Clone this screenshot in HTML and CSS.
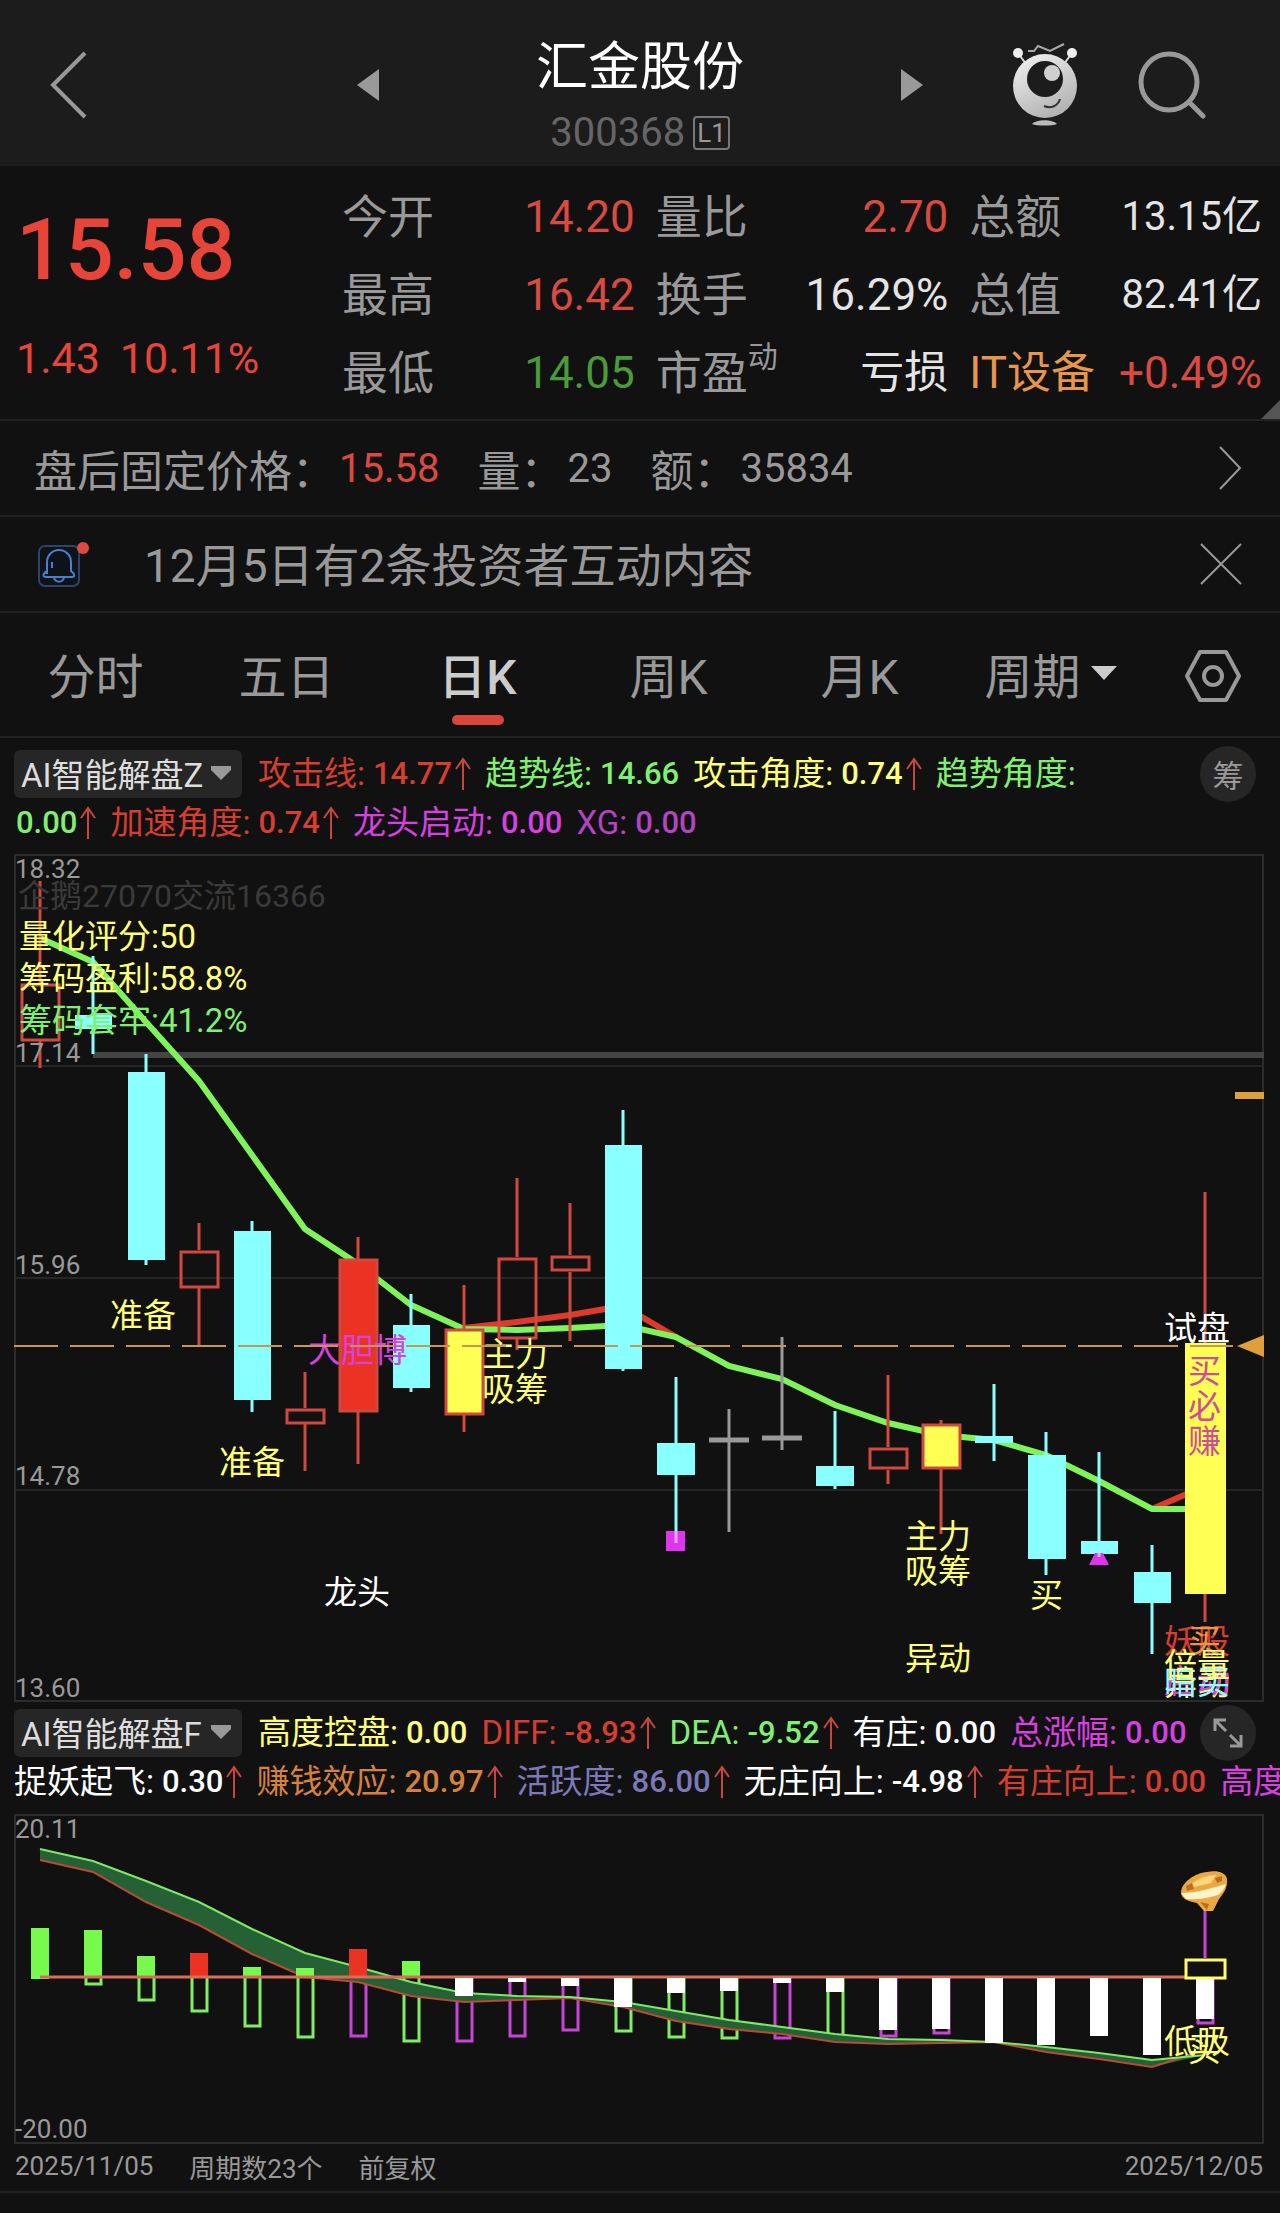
FILE: index.html
```
<!DOCTYPE html>
<html lang="zh-CN">

<head>
    <meta charset="UTF-8">
    <meta name="viewport" content="width=device-width, initial-scale=1">
    <title>汇金股份 300368</title>
    <link rel="stylesheet" href="styles.css">
</head>

<body>
    <!-- 公用图标 -->
    <svg class="sprite" aria-hidden="true">
        <symbol id="up" viewBox="0 0 16 34">
            <path d="M8 33V2M1 12L8 2l7 10" fill="none" stroke="#c8473c" stroke-width="2" />
        </symbol>
        <symbol id="caret" viewBox="0 0 22 14">
            <path d="M1 0h20v4L11 14 1 4z" fill="#999" />
        </symbol>
    </svg>

    <header class="topbar">
        <button class="icon-button" aria-label="返回">
            <svg width="40" height="70" viewBox="0 0 40 70"><path d="M37 3L5 35l32 32" fill="none" stroke="#999" stroke-width="4" /></svg>
        </button>
        <div class="stock-nav">
            <button class="icon-button" aria-label="上一只">
                <svg width="22" height="34" viewBox="0 0 22 34"><path d="M22 1v32L0 17z" fill="#999" /></svg>
            </button>
            <div class="stock-title">
                <h1>汇金股份</h1>
                <p>300368<span class="level">L1</span></p>
            </div>
            <button class="icon-button" aria-label="下一只">
                <svg width="22" height="34" viewBox="0 0 22 34"><path d="M0 1v32l22-16z" fill="#999" /></svg>
            </button>
        </div>
        <div class="actions">
            <button class="icon-button" aria-label="智能助手">
                <svg width="66" height="84" viewBox="0 0 66 84">
                    <defs>
                        <linearGradient id="ball" x1="0" y1="0" x2="0.5" y2="1">
                            <stop offset="0" stop-color="#f4f4f4" />
                            <stop offset="1" stop-color="#b4b4b4" />
                        </linearGradient>
                    </defs>
                    <path d="M6 10l8 11M60 10l-8 11" stroke="#ddd" stroke-width="2" />
                    <circle cx="6" cy="10" r="5" fill="#eee" />
                    <circle cx="60" cy="10" r="5" fill="#eee" />
                    <path d="M16 8h6l4-5 12 5L52 1" fill="none" stroke="#aaa" stroke-width="2" />
                    <circle cx="33" cy="43" r="32" fill="url(#ball)" />
                    <circle cx="33" cy="36" r="18" fill="#1c1c1c" />
                    <circle cx="40" cy="30" r="8" fill="#d0d0d0" />
                    <path d="M32 63c7 3 14 0 16-7" fill="none" stroke="#333" stroke-width="2" />
                    <path d="M20 81c5-5 20-5 25 0-5 2-20 2-25 0z" fill="#bbb" />
                </svg>
            </button>
            <button class="icon-button" aria-label="搜索">
                <svg width="68" height="68" viewBox="0 0 68 68">
                    <circle cx="31" cy="31" r="28" fill="none" stroke="#999" stroke-width="5" />
                    <path d="M51 51l14 14" stroke="#999" stroke-width="5" stroke-linecap="round" />
                </svg>
            </button>
        </div>
    </header>

    <!-- 行情 -->
    <section class="quote">
        <div class="price">
            <strong>15.58</strong>
            <p><span>1.43</span><span>10.11%</span></p>
        </div>
        <dl>
            <div><dt>今开</dt><dd class="red">14.20</dd></div>
            <div><dt>最高</dt><dd class="red">16.42</dd></div>
            <div><dt>最低</dt><dd class="green">14.05</dd></div>
        </dl>
        <dl>
            <div><dt>量比</dt><dd class="red">2.70</dd></div>
            <div><dt>换手</dt><dd>16.29%</dd></div>
            <div><dt>市盈<sup>动</sup></dt><dd>亏损</dd></div>
        </dl>
        <dl>
            <div><dt>总额</dt><dd class="amount">13.15亿</dd></div>
            <div><dt>总值</dt><dd class="amount">82.41亿</dd></div>
            <div><dt class="orange">IT设备</dt><dd class="red">+0.49%</dd></div>
        </dl>
        <span class="corner"></span>
    </section>

    <section class="row after-hours">
        <p><span>盘后固定价格：</span><span class="num red">15.58</span></p>
        <p><span>量：</span><span class="num">23</span></p>
        <p><span>额：</span><span class="num">35834</span></p>
        <button class="icon-button" aria-label="查看">
            <svg width="24" height="46" viewBox="0 0 24 46"><path d="M2 2l20 21L2 44" fill="none" stroke="#999" stroke-width="2" /></svg>
        </button>
    </section>

    <section class="row notice">
        <svg width="52" height="50" viewBox="0 0 52 50">
            <rect x="1" y="7" width="40" height="40" rx="6" fill="#0e1219" stroke="#2c4469" stroke-width="2" />
            <path d="M9 35V23a12 12 0 0 1 24 0v9c4 3 4 6 1 6H8c-4 0-3-4 1-6zM16 39c2 5 8 5 10 0M14 23v6" fill="none" stroke="#4a80cc" stroke-width="2" />
            <circle cx="45" cy="9" r="6" fill="#dc4a40" />
        </svg>
        <p>12月5日有2条投资者互动内容</p>
        <button class="icon-button" aria-label="关闭">
            <svg width="42" height="42" viewBox="0 0 42 42"><path d="M1 1l40 40M41 1L1 41" stroke="#999" stroke-width="2" /></svg>
        </button>
    </section>

    <nav class="tabs">
        <button>分时</button>
        <button>五日</button>
        <button class="active">日K</button>
        <button>周K</button>
        <button>月K</button>
        <button class="period">周期<svg width="26" height="14" viewBox="0 0 26 14"><path d="M0 0h26L13 14z" fill="#ccc" /></svg></button>
        <button class="settings" aria-label="设置">
            <svg width="56" height="52" viewBox="0 0 56 52">
                <path d="M15 2h26l13 24-13 24H15L2 26z" fill="none" stroke="#999" stroke-width="4" stroke-linejoin="round" />
                <circle cx="28" cy="26" r="9" fill="none" stroke="#999" stroke-width="4" />
            </svg>
        </button>
    </nav>

    <!-- 主图指标 -->
    <section class="indicator">
        <div class="line">
            <button class="picker">AI智能解盘Z<svg width="22" height="14"><use href="#caret" /></svg></button>
            <p class="red2">攻击线:<b>14.77</b><svg><use href="#up" /></svg></p>
            <p class="lime">趋势线:<b>14.66</b></p>
            <p class="yellow">攻击角度:<b>0.74</b><svg><use href="#up" /></svg></p>
            <p class="lime">趋势角度:</p>
            <button class="round">筹</button>
        </div>
        <div class="line">
            <p class="lime"><b class="first">0.00</b><svg><use href="#up" /></svg></p>
            <p class="red2">加速角度:<b>0.74</b><svg><use href="#up" /></svg></p>
            <p class="magenta">龙头启动:<b>0.00</b></p>
            <p class="purple">XG:<b>0.00</b></p>
        </div>
    </section>

    <div class="chart">
        <svg viewBox="14 854 1250 848" role="img" aria-label="日K线图">
            <path class="grid" d="M14 1066H1264M14 1278H1264M14 1490H1264" />
            <rect class="frame" x="15" y="855" width="1248" height="846" />
            <path d="M93 1055H1264" stroke="#444" stroke-width="6" />

            <!-- 均线 -->
            <path class="avg" stroke="#dc3a2a" d="M464 1328L517 1322 570 1315 623 1306 676 1337M1152 1509L1205 1486" />
            <path class="avg" stroke="#80f35a" d="M40 938L93 962 146 1022 199 1081 252 1155 305 1229 358 1264 411 1305 464 1329 517 1330 570 1328 623 1325 676 1337 729 1366 782 1379 835 1405 888 1423 941 1435 994 1440 1046 1455 1099 1481 1152 1509H1205" />

            <!-- 阴线 -->
            <g class="down">
                <path d="M93 956V1054M146 1054V1265M252 1221V1412M411 1294V1392M623 1110V1371M676 1377V1543M835 1411V1489M994 1384V1461M1046 1432V1575M1099 1452V1557M1152 1545V1654" />
                <rect x="75" y="1015" width="37" height="14" />
                <rect x="128" y="1072" width="37" height="188" />
                <rect x="234" y="1231" width="37" height="169" />
                <rect x="393" y="1325" width="37" height="63" />
                <rect x="605" y="1145" width="37" height="224" />
                <rect x="657" y="1443" width="38" height="32" />
                <rect x="816" y="1466" width="38" height="20" />
                <rect x="975" y="1436" width="38" height="7" />
                <rect x="1028" y="1455" width="38" height="104" />
                <rect x="1081" y="1541" width="37" height="13" />
                <rect x="1134" y="1572" width="37" height="31" />
            </g>

            <!-- 平盘 -->
            <path class="flat" d="M729 1409V1532M782 1337V1450" />
            <path d="M709 1440H749M762 1438H802" stroke="#999" stroke-width="5" />

            <!-- 阳线 -->
            <g class="up">
                <path d="M40 881V983M40 1041V1068M199 1223V1250M199 1288V1346M305 1372V1408M305 1424V1471M358 1237V1464M464 1285V1432M517 1178V1257M517 1339V1350M570 1203V1255M570 1272V1341M888 1375V1447M888 1470V1484M941 1420V1534M1205 1192V1622" />
                <rect x="22" y="985" width="37" height="55" />
                <rect x="181" y="1252" width="37" height="35" />
                <rect x="287" y="1410" width="37" height="13" />
                <rect x="499" y="1259" width="37" height="79" />
                <rect x="552" y="1257" width="37" height="13" />
                <rect x="870" y="1449" width="37" height="19" />
                <rect x="340" y="1260" width="37" height="151" fill="#ea3323" />
                <rect x="446" y="1330" width="37" height="84" fill="#ffff54" />
                <rect x="923" y="1425" width="37" height="43" fill="#ffff54" />
            </g>
            <rect x="1185" y="1343" width="41" height="251" fill="#ffff54" />
            <path d="M666 1531h19v20h-19zM1095 1553h8l6 12h-20z" fill="#dd36ee" />
            <path d="M676 1531V1543M1099 1553v4" stroke="#e8aaff" stroke-width="3" />

            <!-- 信号文字 -->
            <g class="mark">
                <text class="ghost" x="18" y="907">企鹅27070交流16366</text>
                <text class="c-yellow" x="19" y="948">量化评分:50</text>
                <text class="c-yellow" x="19" y="990">筹码盈利:58.8%</text>
                <text class="c-lime" x="19" y="1032">筹码套牢:41.2%</text>
                <text class="c-yellow" x="110" y="1327">准备</text>
                <text class="c-yellow" x="219" y="1474">准备</text>
                <text class="c-magenta" x="308" y="1362">大胆博</text>
                <text class="c-yellow" x="482" y="1366">主力<tspan x="482" dy="35">吸筹</tspan></text>
                <text class="c-white" x="324" y="1604">龙头</text>
                <text class="c-yellow" x="905" y="1548">主力<tspan x="905" dy="35">吸筹</tspan></text>
                <text class="c-yellow" x="1030" y="1607">买</text>
                <text class="c-yellow" x="905" y="1670">异动</text>
                <text class="c-white" x="1164" y="1340">试盘</text>
                <text class="c-pink" x="1188" y="1383">买<tspan x="1188" dy="35">必</tspan><tspan x="1188" dy="35">赚</tspan></text>
                <text class="c-red" x="1164" y="1653">妖股</text>
                <text class="c-orange" x="1188" y="1653">买</text>
                <text class="c-yellow" x="1164" y="1695">异动</text>
                <text class="c-magenta" x="1164" y="1693">启动</text>
                <text class="c-cyan" x="1164" y="1694">暗买</text>
                <text class="c-yellow" x="1164" y="1677">倍量</text>
            </g>

            <!-- 现价线 -->
            <path d="M14 1346H1233" stroke="#c8964e" stroke-width="2" stroke-dasharray="44 12" />
            <path d="M1264 1335v22l-27-11zM1235 1092h29v7h-29z" fill="#dfa03c" />

            <g class="axis">
                <text x="15" y="878">18.32</text>
                <text x="15" y="1062">17.14</text>
                <text x="15" y="1274">15.96</text>
                <text x="15" y="1485">14.78</text>
                <text x="15" y="1697">13.60</text>
            </g>
        </svg>
    </div>

    <!-- 副图指标 -->
    <section class="indicator sub">
        <div class="line">
            <button class="picker">AI智能解盘F<svg width="22" height="14"><use href="#caret" /></svg></button>
            <p class="yellow">高度控盘:<b>0.00</b></p>
            <p class="red2">DIFF:<b>-8.93</b><svg><use href="#up" /></svg></p>
            <p class="lime">DEA:<b>-9.52</b><svg><use href="#up" /></svg></p>
            <p class="white">有庄:<b>0.00</b></p>
            <p class="magenta">总涨幅:<b>0.00</b></p>
            <button class="round" aria-label="全屏">
                <svg width="30" height="30" viewBox="0 0 30 30"><path d="M2 13V2h11M2 2l11 11M28 17v11H17M28 28L17 17" fill="none" stroke="#999" stroke-width="3" /></svg>
            </button>
        </div>
        <div class="line">
            <p class="white">捉妖起飞:<b>0.30</b><svg><use href="#up" /></svg></p>
            <p class="brown">赚钱效应:<b>20.97</b><svg><use href="#up" /></svg></p>
            <p class="violet">活跃度:<b>86.00</b><svg><use href="#up" /></svg></p>
            <p class="white">无庄向上:<b>-4.98</b><svg><use href="#up" /></svg></p>
            <p class="red2">有庄向上:<b>0.00</b></p>
            <p class="magenta">高度</p>
        </div>
    </section>

    <div class="chart">
        <svg viewBox="14 1814 1250 330" role="img" aria-label="副图指标">
            <rect class="frame" x="15" y="1815" width="1248" height="328" />

            <!-- 空心柱 -->
            <g class="hollow" stroke="#80ee60">
                <path d="M86 1977v7h15v-7M139 1977v23h15v-23M192 1977v34h15v-34M245 1977v49h15v-49M298 1977v60h15v-60M404 1977v64h15v-64M616 1977v54h15v-54M669 1977v60h15v-60M722 1977v61h15v-61M828 1977v59h15v-59" />
            </g>
            <g class="hollow" stroke="#c844d6">
                <path d="M351 1977v59h15v-59M457 1977v64h15v-64M510 1977v59h15v-59M563 1977v53h15v-53M775 1977v61h15v-61M881 1977v59h15v-59M934 1977v56h15v-56M1198 1977v46h15v-46" />
            </g>

            <path fill="#266035" d="M40 1849L93 1861 146 1881 199 1902 252 1929 305 1953 358 1967 411 1982 464 1993 517 1996 570 1997 623 2002 676 2011 729 2020 782 2027 835 2034 888 2039 941 2040 994 2042 1046 2047 1099 2053 1152 2060 1205 2055 1152 2067 1099 2059 1046 2052 994 2042 941 2043 888 2044 835 2042 782 2034 729 2029 676 2021 623 2007 570 1998 517 2000 464 2002 411 1996 358 1982 305 1977 252 1954 199 1925 146 1902 93 1872 40 1860z" />
            <path class="thin" stroke="#b84a38" d="M40 1860L93 1872 146 1902 199 1925 252 1954 305 1977 358 1982 411 1996 464 2002 517 2000 570 1998 623 2007 676 2021 729 2029 782 2034 835 2042 888 2044 941 2043 994 2042 1046 2052 1099 2059 1152 2067 1205 2050" />
            <path class="thin" stroke="#7fe867" d="M40 1849L93 1861 146 1881 199 1902 252 1929 305 1953 358 1967 411 1982 464 1993 517 1996 570 1997 623 2002 676 2011 729 2020 782 2027 835 2034 888 2039 941 2040 994 2042 1046 2047 1099 2053 1152 2060 1205 2055" />

            <!-- 实心柱 -->
            <path class="solid" stroke="#77fa4b" d="M40 1928V1979M93 1930V1977M146 1956V1977M252 1967V1977M305 1968V1977M411 1961V1977" />
            <path class="solid" stroke="#ea3323" d="M199 1953V1977M358 1949V1977" />
            <path d="M40 1977H1185" stroke="#dc6c58" stroke-width="3" />
            <path class="solid" stroke="#fff" d="M464 1978V1996M517 1978V1982M570 1978V1986M623 1978V2007M676 1978V1993M729 1978V1991M782 1978V1983M835 1978V1992M888 1978V2030M941 1978V2029M994 1978V2043M1046 1978V2045M1099 1978V2036M1152 1978V2055M1205 1978V2019" />

            <path d="M1205 1910V1958" stroke="#c844d6" stroke-width="3" />
            <rect x="1186" y="1960" width="39" height="18" fill="#111" stroke="#ffff66" stroke-width="3" />
            <!-- 金元宝 -->
            <path d="M1181 1892c1-10 14-19 26-20 9-2 19 0 20 7 1 10-5 16-8 20l-6 12h-9l-7-8c-9-2-16-4-16-11z" fill="#eda844" />
            <path d="M1192 1884c6-6 17-9 24-9l-5 8-17 4z" fill="#ffd57a" />
            <path d="M1181 1893c15 0 32-5 45-9-2 6-5 9-8 11-13 4-25 5-32 4z" fill="#fff3c8" />
            <path d="M1186 1886l6-3 2 6-7 2zM1215 1878l7-2v5l-5 2zM1200 1902l9 2-2 6z" fill="#b8701c" />

            <g class="mark">
                <text class="c-yellow" x="1164" y="2053">低吸</text>
                <text class="c-yellow" x="1188" y="2061">买</text>
            </g>
            <g class="axis">
                <text x="15" y="1838">20.11</text>
                <text x="15" y="2138">-20.00</text>
            </g>
        </svg>
    </div>

    <footer class="dates">
        <span>2025/11/05</span>
        <span>周期数23个</span>
        <span>前复权</span>
        <span class="last">2025/12/05</span>
    </footer>
</body>

</html>
```
FILE: styles.css
```
* {
    box-sizing: border-box;
}

body {
    margin: 0;
    background-color: #111;
    color: #999;
    font-family: Roboto, "Noto Sans CJK SC", sans-serif;
    overflow-x: hidden;
}

h1,
p,
dl,
dd {
    margin: 0;
    font-weight: 400;
}

button {
    padding: 0;
    border: none;
    background: none;
    color: inherit;
    font: inherit;
    cursor: pointer;
}

svg {
    display: block;
    flex-shrink: 0;
}

.sprite {
    position: absolute;
    width: 0;
    height: 0;
}

/* 顶部栏 */
.topbar {
    display: grid;
    grid-template-columns: 1fr 566px 1fr;
    align-items: center;
    height: 166px;
    padding: 4px 48px 0;
    background-color: #1c1c1c;
}

.topbar > .icon-button {
    justify-self: start;
}

.stock-nav {
    display: flex;
    align-items: center;
    justify-content: space-between;
}

.topbar .actions {
    display: flex;
    align-items: center;
    justify-content: flex-end;
    gap: 60px;
    padding-right: 26px;
}

.stock-title {
    padding-top: 26px;
    text-align: center;
}

.stock-title h1 {
    color: #fff;
    font-size: 52px;
    line-height: 70px;
}

.stock-title p {
    display: flex;
    align-items: center;
    justify-content: center;
    gap: 8px;
    color: #666;
    font-size: 40px;
    line-height: 60px;
}

.level {
    padding: 0 2px;
    border: 2px solid #777;
    border-radius: 4px;
    color: #999;
    font-size: 26px;
    line-height: 30px;
}

/* 行情 */
.quote {
    position: relative;
    display: flex;
    gap: 21px;
    height: 255px;
    padding: 12px 18px 0 16px;
    border-bottom: 2px solid #222;
}

.price {
    flex: 0 0 305px;
    color: #e8453a;
}

.price strong {
    display: block;
    padding-top: 22px;
    font-size: 86px;
    font-weight: 500;
    line-height: 100px;
}

.price p {
    display: flex;
    gap: 20px;
    padding-top: 33px;
    font-size: 43px;
    line-height: 50px;
}

.quote dl {
    flex: 1;
}

.quote dl div {
    display: flex;
    align-items: center;
    justify-content: space-between;
    height: 78px;
    font-size: 44px;
    line-height: 78px;
    white-space: nowrap;
}

.quote dt {
    font-size: 46px;
}

.quote dd {
    color: #e4e4e4;
}

.quote .amount {
    font-size: 40px;
}

.quote sup {
    font-size: 30px;
    line-height: 0;
    vertical-align: 22px;
}

.quote .red,
.row .red {
    color: #d94a40;
}

.quote .green {
    color: #4a9c38;
}

.quote .orange {
    color: #e8964a;
    font-size: 44px;
}

.corner {
    position: absolute;
    right: 0;
    bottom: 0;
    border-left: 19px solid transparent;
    border-bottom: 19px solid #555;
}

/* 盘后与公告 */
.row {
    display: flex;
    align-items: center;
    height: 96px;
    padding: 0 38px;
    border-bottom: 2px solid #222;
    white-space: nowrap;
}

.row .icon-button {
    margin-left: auto;
}

.after-hours {
    gap: 38px;
    padding-left: 34px;
    font-size: 43px;
}

.after-hours p {
    display: flex;
    align-items: center;
    gap: 4px;
}

.after-hours .num {
    font-size: 40px;
}

.notice {
    gap: 54px;
    font-size: 46px;
}

.notice p {
    padding-bottom: 4px;
}

/* 周期标签 */
.tabs {
    display: grid;
    grid-template-columns: repeat(6, 191fr) 134fr;
    height: 125px;
    border-bottom: 2px solid #222;
    font-size: 48px;
}

.tabs button {
    position: relative;
    display: flex;
    align-items: center;
    justify-content: center;
    padding-bottom: 4px;
}

.tabs .settings {
    padding: 2px 0 0;
}

.tabs .active {
    color: #ccc;
    font-weight: 500;
}

.tabs .active::after {
    content: "";
    position: absolute;
    bottom: 11px;
    width: 52px;
    height: 10px;
    border-radius: 5px;
    background-color: #d9453a;
}

.tabs .period {
    gap: 10px;
}

/* 指标栏 */
.indicator {
    height: 116px;
    padding: 11px 0 0 14px;
    overflow: hidden;
}

.indicator.sub {
    height: 112px;
    padding-top: 6px;
}

.indicator .line {
    position: relative;
    display: flex;
    align-items: center;
    gap: 14px;
    height: 49px;
    font-size: 33px;
    white-space: nowrap;
}

.indicator p {
    display: flex;
    align-items: center;
    line-height: 48px;
}

.indicator p svg {
    width: 16px;
    height: 34px;
    margin-left: 3px;
}

.indicator b {
    margin-left: 8px;
    font-size: 31px;
    font-weight: 500;
}

.indicator .first {
    margin-left: 2px;
}

.picker {
    display: flex;
    align-items: center;
    justify-content: space-between;
    width: 228px;
    height: 48px;
    margin-right: 2px;
    padding: 0 10px 2px 7px;
    border-radius: 6px;
    background-color: #262626;
    color: #ddd;
    font-size: 33px;
}

.round {
    position: absolute;
    right: 24px;
    display: flex;
    align-items: center;
    justify-content: center;
    width: 56px;
    height: 56px;
    border-radius: 50%;
    background-color: #262626;
    font-size: 31px;
}

.red2 {
    color: #d63e30;
}

.lime {
    color: #80f070;
}

.yellow {
    color: #ffff78;
}

.magenta {
    color: #d840e0;
}

.purple {
    color: #b444c0;
}

.white {
    color: #fff;
}

.brown {
    color: #d6813e;
}

.violet {
    color: #7d78b8;
}

/* 图表 */
.chart {
    padding: 0 16px 0 14px;
}

.chart svg {
    width: 100%;
    height: auto;
}

.grid {
    stroke: #262626;
    stroke-width: 2;
}

.frame {
    fill: none;
    stroke: #2c2c2c;
    stroke-width: 2;
}

.avg {
    fill: none;
    stroke-width: 6;
}

.down path {
    stroke: #8affff;
    stroke-width: 3;
}

.down rect {
    fill: #8affff;
}

.flat {
    stroke: #999;
    stroke-width: 3;
}

.up {
    fill: none;
    stroke: #d0483e;
    stroke-width: 3;
}

.hollow {
    fill: none;
    stroke-width: 3;
}

.thin {
    fill: none;
    stroke-width: 2;
}

.solid {
    stroke-width: 18;
}

.mark {
    font-size: 33px;
}

.axis {
    fill: #999;
    font-size: 26px;
}

.ghost {
    fill: #3a3a3a;
    font-size: 32px;
}

.c-yellow {
    fill: #ffff78;
}

.c-lime {
    fill: #80f070;
}

.c-magenta {
    fill: #d840e0;
}

.c-pink {
    fill: #d24a9a;
}

.c-white {
    fill: #fff;
}

.c-red {
    fill: #d63e30;
}

.c-orange {
    fill: #e8964a;
}

.c-cyan {
    fill: #8affff;
}

/* 底部日期 */
.dates {
    display: flex;
    align-items: center;
    gap: 36px;
    height: 49px;
    padding: 0 17px 3px 15px;
    border-bottom: 2px solid #222;
    font-size: 26px;
}

.dates .last {
    margin-left: auto;
}
```
